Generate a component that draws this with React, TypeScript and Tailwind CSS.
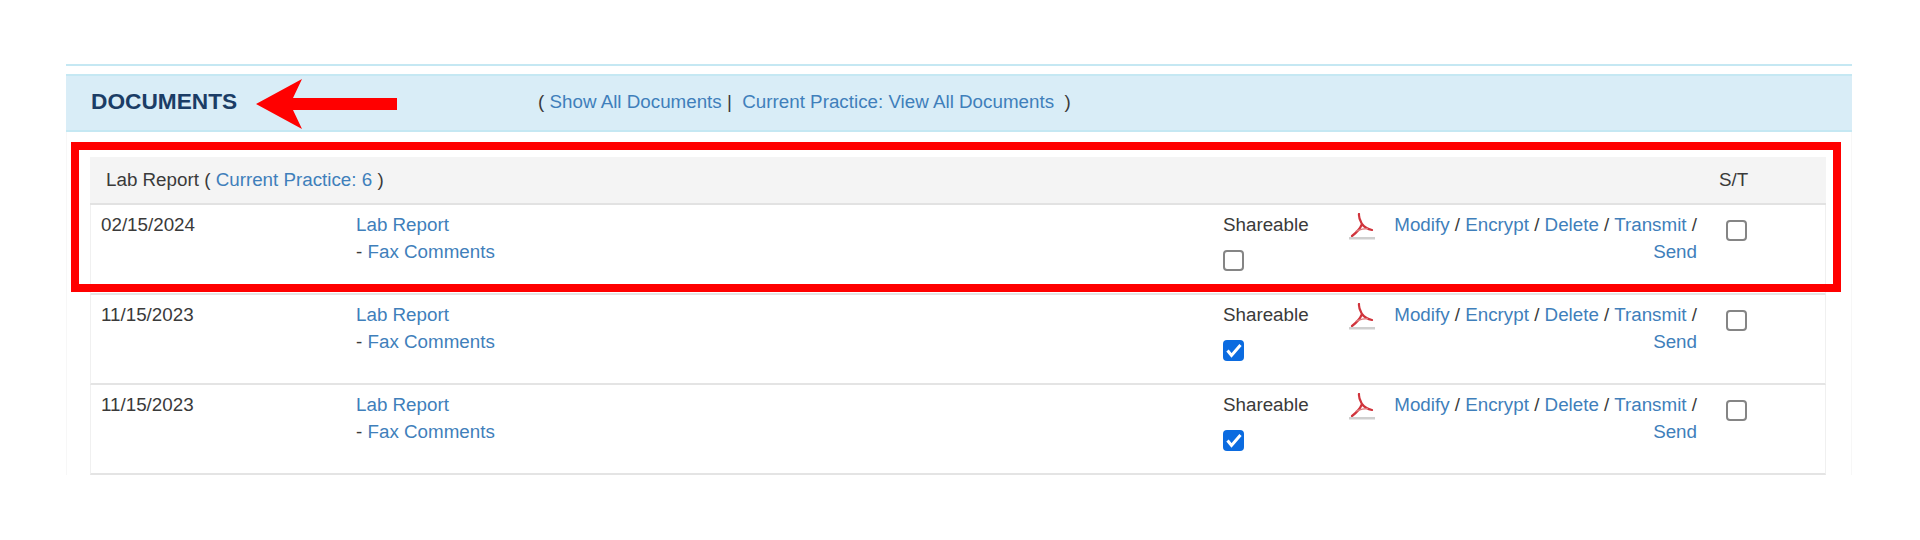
const PdfIcon = () => (
  <svg width="27" height="27" viewBox="0 0 27 27" fill="none" className="mt-0.5 shrink-0">
    <path d="M11 1c-.5 4 1.500 7 3 10 2.500 3.500 5 5 10 6M14 11c-2 5-6 9-10 12" stroke="#d0343c" strokeWidth="2.200" strokeLinecap="round" />
    <path d="M8 18c4-1.500 8-2.500 12-2.500" stroke="#e0787c" strokeWidth="1.500" />
    <rect x="1" y="24" width="26" height="2.500" fill="#cfcfcf" />
  </svg>
);

const Checkbox = ({ checked = false }: { checked?: boolean }) =>
  checked ? (
    <span className="block w-[21px] h-[21px] rounded-[4px] bg-[#0b6be0]">
      <svg width="21" height="21" viewBox="0 0 21 21" fill="none">
        <path d="M4.500 10.500l4 5 9-10.500" stroke="#fff" strokeWidth="3" />
      </svg>
    </span>
  ) : (
    <span className="block w-[21px] h-[21px] rounded-[4px] border-2 border-[#858585] bg-white" />
  );

const A = ({ children }: { children: React.ReactNode }) => (
  <a className="text-[#3f7fbb]">{children}</a>
);

const rows = [
  { date: '02/15/2024', checked: false },
  { date: '11/15/2023', checked: true },
  { date: '11/15/2023', checked: true },
];

export default function App() {
  return (
    <div className="relative min-h-[540px] bg-white pt-16 pl-[66px] font-['Liberation_Sans',Arial,sans-serif] text-[18.800px] leading-[27px] text-[#3a3a3a]">
      <div className="w-[1786px]">
        <div className="h-0.5 bg-[#c5e8f3]" />

        {/* Section title */}
        <div className="mt-2 flex h-[58px] items-center border-y-2 border-[#c5e8f3] bg-[#d9edf7] pb-1 pl-[25px]">
          <h2 className="w-[447px] text-[22.700px] font-bold text-[#1b3d66]">DOCUMENTS</h2>
          <span>( <A>Show All Documents</A> |&nbsp; <A>Current Practice: View All Documents</A> &nbsp;)</span>
        </div>

        <div className="border-x border-[#f7f7f7] pl-[23px] pr-[25px] pt-[25px]">
          {/* Table header */}
          <div className="flex h-[48px] items-center border-b-2 border-[#e2e2e2] bg-[#f4f4f4] pb-0.5 pl-4">
            <span className="w-[1613px]">Lab Report ( <A>Current Practice: 6</A> )</span>
            <span>S/T</span>
          </div>

          {rows.map((row, i) => (
            <div key={i} className="flex h-[90px] border-b-2 border-b-[#e4e4e4] border-x border-x-[#f0f0f0] pt-[6px]">
              <div className="w-[265px] shrink-0 pl-[10px]">{row.date}</div>
              <div className="w-[867px] shrink-0">
                <div><A>Lab Report</A></div>
                <div>- <A>Fax Comments</A></div>
              </div>
              <div className="w-[125px] shrink-0">
                <div>Shareable</div>
                <div className="mt-[12px]"><Checkbox checked={row.checked} /></div>
              </div>
              <div className="w-[45px] shrink-0"><PdfIcon /></div>
              <div className="w-[304px] shrink-0 text-right">
                <A>Modify</A> / <A>Encrypt</A> / <A>Delete</A> / <A>Transmit</A> / <A>Send</A>
              </div>
              <div className="ml-[29px] pt-[9px]"><Checkbox /></div>
            </div>
          ))}
        </div>
      </div>

      {/* Annotation arrow */}
      <svg width="142" height="50" viewBox="0 0 142 50" className="absolute left-[256px] top-[79px]">
        <path d="M0 25 L46 0 L37 19 L141 19 L141 31 L37 31 L46 50 Z" fill="#ff0000" />
      </svg>

      {/* Annotation box */}
      <div className="absolute left-[71px] top-[142px] h-[150px] w-[1770px] border-[8px] border-[#ff0000]" />
    </div>
  );
}
